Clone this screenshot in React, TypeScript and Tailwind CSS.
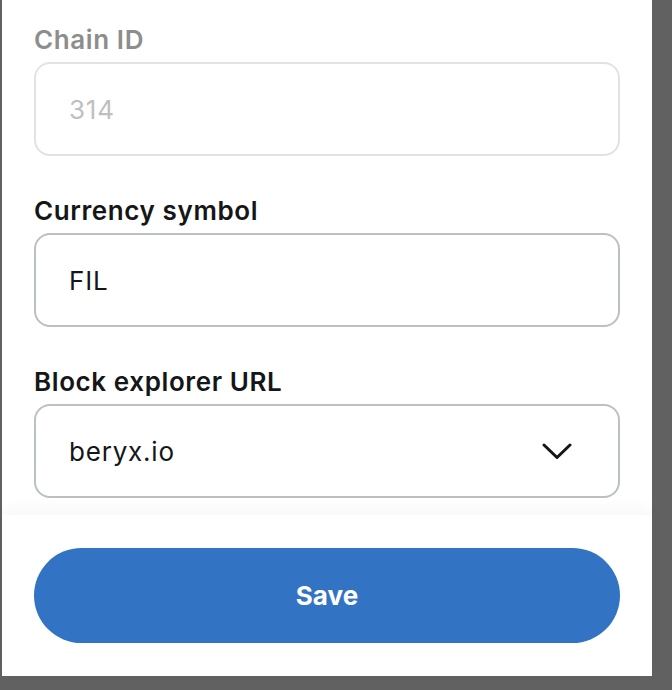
const font = { fontFamily: "Inter, 'Noto Sans', sans-serif" };

function Chevron() {
  return (
    <svg width="30" height="17" viewBox="0 0 30 17" fill="none">
      <polyline
        points="2,2 15,14.5 28,2"
        stroke="#141618"
        strokeWidth="3"
        strokeLinecap="round"
        strokeLinejoin="round"
      />
    </svg>
  );
}

function Field({
  label,
  value,
  disabled,
  select,
}: {
  label: string;
  value: string;
  disabled?: boolean;
  select?: boolean;
}) {
  return (
    <div className="flex flex-col">
      <label
        className={`mb-[6px] text-[26px] leading-[32px] font-semibold tracking-[0.6px] ${
          disabled ? "text-[#8d8d8d]" : "text-[#141618]"
        }`}
      >
        {label}
      </label>
      <div
        className={`flex h-[94px] items-center justify-between rounded-[16px] border-2 pr-[46px] pl-[33px] ${
          disabled ? "border-[#e2e2e2]" : "border-[#bbc0c5]"
        }`}
      >
        <span
          className={`text-[26px] tracking-[0.8px] ${
            disabled ? "text-[#bfbfbf]" : "text-[#141618]"
          }`}
        >
          {value}
        </span>
        {select && <Chevron />}
      </div>
    </div>
  );
}

export default function App() {
  return (
    <div className="flex h-[690px] w-[672px] bg-[#616161]" style={font}>
      <div className="ml-[2px] flex h-[676px] w-[650px] flex-col bg-white">
        <div className="flex flex-1 flex-col gap-[39px] overflow-hidden px-8 pt-[24px]">
          <Field label="Chain ID" value="314" disabled />
          <Field label="Currency symbol" value="FIL" />
          <Field label="Block explorer URL" value="beryx.io" select />
        </div>
        <div className="relative z-10 bg-white px-8 pt-[33px] pb-[33px] shadow-[0_-6px_14px_rgba(0,0,0,0.035)]">
          <button className="h-[95px] w-full rounded-full bg-[#3373c4] text-[26px] font-bold text-white">
            Save
          </button>
        </div>
      </div>
    </div>
  );
}
